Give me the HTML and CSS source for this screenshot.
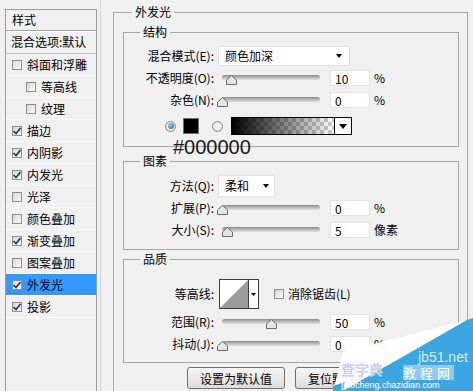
FILE: index.html
```html
<!DOCTYPE html>
<html>

<head>
    <title>图层样式 - 外发光</title>
    <link rel="stylesheet" href="styles.css">
</head>

<body>
    <aside class="styles-list">
        <div class="list-head">样式</div>
        <div class="list-head blend">混合选项:默认</div>
        <ul class="fx">
            <li><span class="cb"></span>斜面和浮雕</li>
            <li class="sub"><span class="cb"></span>等高线</li>
            <li class="sub"><span class="cb"></span>纹理</li>
            <li><span class="cb"><svg width="10" height="10"><path d="M1.5 5 L4 7.5 L8.5 2" fill="none" stroke="#243754" stroke-width="1.6"/></svg></span>描边</li>
            <li><span class="cb"><svg width="10" height="10"><path d="M1.5 5 L4 7.5 L8.5 2" fill="none" stroke="#243754" stroke-width="1.6"/></svg></span>内阴影</li>
            <li><span class="cb"><svg width="10" height="10"><path d="M1.5 5 L4 7.5 L8.5 2" fill="none" stroke="#243754" stroke-width="1.6"/></svg></span>内发光</li>
            <li><span class="cb"></span>光泽</li>
            <li><span class="cb"></span>颜色叠加</li>
            <li><span class="cb"><svg width="10" height="10"><path d="M1.5 5 L4 7.5 L8.5 2" fill="none" stroke="#243754" stroke-width="1.6"/></svg></span>渐变叠加</li>
            <li><span class="cb"></span>图案叠加</li>
            <li class="sel"><span class="cb"><svg width="10" height="10"><path d="M1.5 5 L4 7.5 L8.5 2" fill="none" stroke="#243754" stroke-width="1.6"/></svg></span>外发光</li>
            <li><span class="cb"><svg width="10" height="10"><path d="M1.5 5 L4 7.5 L8.5 2" fill="none" stroke="#243754" stroke-width="1.6"/></svg></span>投影</li>
        </ul>
    </aside>

    <main class="panel">
        <fieldset class="outer">
            <legend>外发光</legend>

            <fieldset class="group struct">
                <legend>结构</legend>
                <div class="row">
                    <label>混合模式(E):</label>
                    <div class="select mode">颜色加深<i class="caret"></i></div>
                </div>
                <div class="row">
                    <label>不透明度(O):</label>
                    <div class="slider"><div class="track"></div><svg class="thumb" style="left: 4.3px" width="11" height="10"><polygon points="5.5,0.5 10.5,5 10.5,9.5 0.5,9.5 0.5,5" fill="#e4e4e4" stroke="#6b6b6b"/></svg></div>
                    <input class="num" value="10">
                    <span class="unit">%</span>
                </div>
                <div class="row">
                    <label>杂色(N):</label>
                    <div class="slider"><div class="track"></div><svg class="thumb" style="left: -5.5px" width="11" height="10"><polygon points="5.5,0.5 10.5,5 10.5,9.5 0.5,9.5 0.5,5" fill="#e4e4e4" stroke="#6b6b6b"/></svg></div>
                    <input class="num" value="0">
                    <span class="unit">%</span>
                </div>
                <div class="row color">
                    <span class="radio on"></span>
                    <span class="swatch"></span>
                    <span class="radio"></span>
                    <div class="gradient">
                        <div class="ramp"></div>
                        <div class="drop"><i class="caret big"></i></div>
                    </div>
                </div>
            </fieldset>

            <fieldset class="group pixels">
                <legend>图素</legend>
                <div class="row">
                    <label>方法(Q):</label>
                    <div class="select method">柔和<i class="caret"></i></div>
                </div>
                <div class="row">
                    <label>扩展(P):</label>
                    <div class="slider"><div class="track"></div><svg class="thumb" style="left: -5.5px" width="11" height="10"><polygon points="5.5,0.5 10.5,5 10.5,9.5 0.5,9.5 0.5,5" fill="#e4e4e4" stroke="#6b6b6b"/></svg></div>
                    <input class="num" value="0">
                    <span class="unit">%</span>
                </div>
                <div class="row">
                    <label>大小(S):</label>
                    <div class="slider"><div class="track"></div><svg class="thumb" style="left: 0.4px" width="11" height="10"><polygon points="5.5,0.5 10.5,5 10.5,9.5 0.5,9.5 0.5,5" fill="#e4e4e4" stroke="#6b6b6b"/></svg></div>
                    <input class="num" value="5">
                    <span class="unit">像素</span>
                </div>
            </fieldset>

            <fieldset class="group quality">
                <legend>品质</legend>
                <div class="row contour-row">
                    <label>等高线:</label>
                    <div class="contour">
                        <svg width="38" height="28">
                            <polygon points="0,28 28,0 28,28" fill="#9c9c9c"/>
                            <line x1="28.5" y1="0" x2="28.5" y2="28" stroke="#3c3c3c"/>
                            <polygon points="31,13 36,13 33.5,16" fill="#000"/>
                        </svg>
                    </div>
                    <span class="cb aa"></span>消除锯齿(L)
                </div>
                <div class="row">
                    <label>范围(R):</label>
                    <div class="slider"><div class="track"></div><svg class="thumb" style="left: 43.5px" width="11" height="10"><polygon points="5.5,0.5 10.5,5 10.5,9.5 0.5,9.5 0.5,5" fill="#e4e4e4" stroke="#6b6b6b"/></svg></div>
                    <input class="num" value="50">
                    <span class="unit">%</span>
                </div>
                <div class="row">
                    <label>抖动(J):</label>
                    <div class="slider"><div class="track"></div><svg class="thumb" style="left: -5.5px" width="11" height="10"><polygon points="5.5,0.5 10.5,5 10.5,9.5 0.5,9.5 0.5,5" fill="#e4e4e4" stroke="#6b6b6b"/></svg></div>
                    <input class="num" value="0">
                    <span class="unit">%</span>
                </div>
            </fieldset>

            <div class="actions">
                <button class="btn">设置为默认值</button>
                <button class="btn reset">复位默认值</button>
            </div>
        </fieldset>

        <span class="hex">#000000</span>
    </main>

    <div class="watermark">
        <svg width="140" height="75">
            <polygon points="10,36 134,4 10,75 0,75" fill="#ffffff" opacity="0.94"/>
            <polygon points="134,4 140,2 140,75 10,75" fill="#3ba7e2"/>
            <polygon points="0,70 12,66 10,75 0,75" fill="#3ba7e2"/>
        </svg>
        <span class="wm-site">jb51.net</span>
        <span class="wm-cz">查字典</span>
        <span class="wm-jc">教程网</span>
        <span class="wm-url">jiaocheng.chazidian.com</span>
    </div>
</body>

</html>
```

FILE: styles.css
```css
* {
    box-sizing: border-box;
}

body {
    margin: 0;
    width: 473px;
    height: 391px;
    overflow: hidden;
    position: relative;
    display: flex;
    align-items: flex-start;
    background-color: #f0f0f0;
    font-family: "Noto Sans CJK SC", "Liberation Sans", sans-serif;
    font-size: 12px;
    line-height: 16px;
    color: #000;
}

/* left list of effects */
.styles-list {
    margin: 9px 0 0 5px;
    width: 92px;
    height: 390px;
    border: 1px solid #9c9c9c;
    border-bottom: none;
}

.list-head {
    height: 21px;
    line-height: 20px;
    padding-left: 6px;
    border-bottom: 1px solid #a3a3a3;
    box-shadow: 0 1px 0 #fff;
}

.list-head.blend {
    height: 23px;
    line-height: 22px;
    padding-left: 5px;
    border-bottom-color: #c6c6c6;
    box-shadow: none;
}

.fx {
    list-style: none;
    margin: 0;
    padding: 0;
}

.fx li {
    height: 22px;
    display: flex;
    align-items: center;
    padding-left: 6px;
    border-bottom: 1px solid #f9f9f9;
}

.fx li.sub {
    padding-left: 20px;
}

.fx li.sel {
    background-color: #3399ff;
}

.cb {
    flex: none;
    display: inline-flex;
    width: 10px;
    height: 10px;
    margin-right: 5px;
    border: 1px solid #8e8f8f;
    background: linear-gradient(135deg, #d6d6d6, #fbfbfb);
}

.cb svg {
    display: block;
    margin: -1px 0 0 -1px;
}

/* right panel */
.panel {
    position: relative;
    height: 391px;
    margin-left: 3px;
    padding-left: 12px;
    border-left: 1px solid #d6d6d6;
}

fieldset {
    margin: 0;
    min-width: 0;
    border: 1px solid #a7a7a7;
}

legend {
    padding: 0 3px;
    line-height: 16px;
}

.outer {
    width: 355px;
    height: 400px;
    margin-top: 4px;
    padding: 4px 8px 0 9px;
    border-bottom: none;
}

.outer > legend {
    margin-left: 9px;
}

.group {
    padding: 5px 0 9px 0;
}

.group > legend {
    margin-left: 16px;
}

.pixels {
    margin-top: 6px;
    padding-top: 6px;
    padding-bottom: 8px;
}

.quality {
    margin-top: 1px;
    padding-top: 10px;
    padding-bottom: 7px;
}

.row {
    display: flex;
    align-items: center;
    height: 22px;
    white-space: nowrap;
}

.row label {
    width: 90px;
    margin-right: 4px;
    text-align: right;
}

.select {
    display: flex;
    align-items: center;
    justify-content: space-between;
    height: 20px;
    padding: 0 7px 0 6px;
    background-color: #fff;
    border: 1px solid #e2e2e2;
}

.select.mode {
    width: 132px;
}

.select.method {
    width: 57px;
    height: 22px;
    padding-right: 5px;
}

.caret {
    width: 0;
    height: 0;
    border-left: 3.5px solid transparent;
    border-right: 3.5px solid transparent;
    border-top: 4px solid #000;
}

.caret.big {
    border-left-width: 4.5px;
    border-right-width: 4.5px;
    border-top-width: 5px;
}

.slider {
    position: relative;
    width: 98px;
    height: 10px;
    margin: 4px 10px 0 4px;
}

.track {
    height: 5px;
    border-radius: 3px;
    background: linear-gradient(#8a8a8a, #c4c4c4 60%, #dedede);
}

.thumb {
    position: absolute;
    top: 0;
}

.num {
    width: 40px;
    height: 16px;
    padding: 0 0 0 4px;
    border: 1px solid #e3e3e3;
    background-color: #fff;
    font-family: inherit;
    font-size: 12px;
    line-height: 14px;
    color: #000;
}

.unit {
    margin-left: 4px;
}

.row.color {
    margin-top: 4px;
    padding-left: 41px;
}

.radio {
    display: flex;
    align-items: center;
    justify-content: center;
    width: 11px;
    height: 11px;
    border-radius: 50%;
    border: 1px solid #8a8a8a;
    background: radial-gradient(#fff, #d8d8d8);
}

.radio.on::after {
    content: "";
    width: 6px;
    height: 6px;
    border-radius: 50%;
    background: radial-gradient(circle at 35% 35%, #8fd0f5, #1565a8);
}

.radio + .radio,
.swatch + .radio {
    margin-left: 13px;
}

.swatch {
    width: 16px;
    height: 16px;
    margin-left: 7px;
    background-color: #000;
    border: 1px solid #6f6f6f;
}

.gradient {
    display: flex;
    width: 121px;
    height: 18px;
    margin-left: 8px;
    border: 1px solid #000;
}

.gradient .ramp {
    flex: 1;
    background:
        linear-gradient(to right, #000, rgba(0, 0, 0, 0)),
        repeating-conic-gradient(#cdcdcd 0 25%, #fff 0 50%) 0 0 / 8px 8px;
}

.gradient .drop {
    display: flex;
    align-items: center;
    justify-content: center;
    width: 17px;
    border-left: 1px solid #000;
    background-color: #fff;
}

.hex {
    position: absolute;
    left: 72px;
    top: 137px;
    font-family: "Liberation Sans", Arial, sans-serif;
    font-size: 20px;
    line-height: 20px;
    color: #1a1a1a;
}

.contour-row {
    height: 34px;
}

.contour-row label {
    margin-right: 5px;
}

.contour {
    width: 40px;
    height: 30px;
    background-color: #fff;
    border: 1px solid #3c3c3c;
}

.contour svg {
    display: block;
}

.cb.aa {
    margin: 0 4px 0 15px;
}

.actions {
    display: flex;
    gap: 10px;
    margin: 4px 0 0 64px;
}

.btn {
    width: 98px;
    height: 22px;
    padding: 0;
    border: 1px solid #707070;
    border-radius: 3px;
    background: linear-gradient(#f6f6f6, #dcdcdc);
    font-family: inherit;
    font-size: 12px;
    color: #000;
}

.btn.reset {
    text-align: left;
    padding-left: 12px;
}

/* site watermark in the corner */
.watermark {
    position: absolute;
    right: 0;
    bottom: 0;
    width: 140px;
    height: 75px;
}

.watermark svg {
    display: block;
}

.watermark span {
    position: absolute;
    white-space: nowrap;
}

.wm-site {
    left: 85px;
    top: 33px;
    font-family: "Liberation Sans", sans-serif;
    font-size: 14px;
    line-height: 16px;
    color: #d6eeff;
}

.wm-cz {
    left: 8px;
    top: 45px;
    font-size: 14px;
    line-height: 16px;
    font-weight: bold;
    color: #c9cfe8;
}

.wm-jc {
    left: 70px;
    top: 49px;
    font-size: 13px;
    line-height: 15px;
    letter-spacing: 4px;
    color: #fff;
    background-color: rgba(180, 215, 240, 0.7);
}

.wm-url {
    left: 8px;
    top: 64px;
    font-family: "Liberation Sans", sans-serif;
    font-size: 9px;
    line-height: 11px;
    color: #fff;
}
```
